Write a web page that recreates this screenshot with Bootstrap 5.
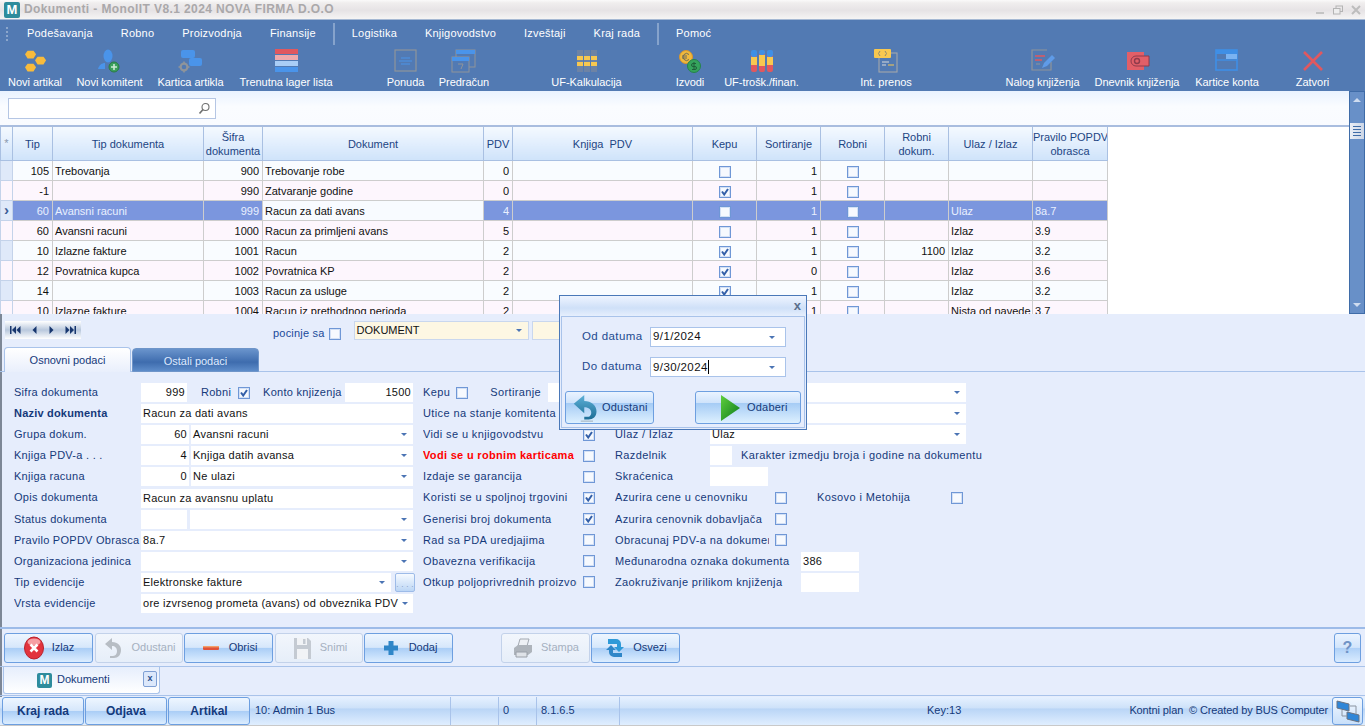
<!DOCTYPE html>
<html lang="sr">
<head>
<meta charset="UTF-8">
<title>Dokumenti - MonolIT</title>
<link href="https://cdn.jsdelivr.net/npm/bootstrap@5.3.0/dist/css/bootstrap.min.css" rel="stylesheet">
<style>
html, body { height: 726px; overflow: hidden; }
body { width: 1365px; background: #e6edfc; font-family: "Liberation Sans", Arial, sans-serif; font-size: 11px; color: #15397a; position: relative; line-height: 1.2; }
.app { height: 726px; border-left: 2px solid #7d8796; }
.app > * { margin-left: -2px; }

/* title + menu */
.titlebar { height: 19px; background: linear-gradient(#fafafa 0, #f0eeee 15%, #e6e3e5 55%, #f5f4f4 100%); color: #aaa8aa; font-weight: 700; font-size: 12px; letter-spacing: .4px; }
.mlogo { width: 16px; height: 16px; background: #2e8c9c; color: #fff; font-weight: 700; font-size: 13px; line-height: 16px; text-align: center; border-radius: 2px; flex: none; letter-spacing: 0; }
.win-btns { gap: 8px; }
.win-btns svg { display: block; }
.menuband { background: #527ab3; color: #fff; height: 72px; border-top: 1px solid #a5b8d3; }
.menurow { height: 26px; padding: 1px 0 0 27px; gap: 28px; letter-spacing: .2px; position: relative; }
.menu-grip { position: absolute; left: 6px; top: 7px; width: 2px; height: 14px; border-left: 2px dotted #8ba6cc; }
.menu-sep { width: 2px; height: 22px; background: #86a3cc; margin: 0 -11px; }
.toolrow { padding-left: 8px; gap: 15px; }
.tool { display: flex; flex-direction: column; align-items: center; white-space: nowrap; letter-spacing: -.04px; }
.tool svg { height: 24px; width: 26px; display: block; margin: 3px 0; }
.t30 { width: 30px; } .t35 { width: 35px; } .t37 { width: 37px; } .t50 { width: 50px; } .t54 { width: 54px; } .t64 { width: 64px; } .t65 { width: 65px; } .t67 { width: 67px; } .t73 { width: 73px; } .t77 { width: 77px; } .t86 { width: 86px; } .t92 { width: 92px; }
.sp1 { margin-left: 1px; } .sp2 { margin-left: 2px; } .sp3 { margin-left: 3px; } .sp40 { margin-left: 40px; } .sp49 { margin-left: 49px; } .sp44 { margin-left: 44px; } .sp78 { margin-left: 78px; } .sp21 { margin-left: 21px; }

/* search strip */
.searchbar { height: 34px; background: linear-gradient(#e9f2ff 0, #fafcff 45%, #f9fbff 100%); padding: 7px 8px 0; width: 1349px; }
.searchbox { width: 208px; height: 21px; background: #fff; border: 1px solid #b5c6e4; }

/* grid */
.gridwrap { width: 1349px; height: 189px; overflow: hidden; background: #fff; border-top: 2px solid #a9bddf; }
.dgrid { table-layout: fixed; width: 1107px; margin: 0; font-size: 11px; border-collapse: collapse; color: #111; }
.dgrid th, .dgrid td { padding: 1px 2px 0; border: 1px solid #cdcdcd; height: 20px; line-height: 18px; white-space: nowrap; overflow: hidden; vertical-align: middle; }
.dgrid thead th { height: 33px; line-height: 14px; font-weight: 400; text-align: center; color: #1d4583; background: linear-gradient(#f4f9ff, #cfe3fa); border: 1px solid #a9c0e2; border-top: 0; }
.dgrid tbody td { background: #f9fcff; }
.dgrid tbody tr.alt td { background: #fdf6fd; }
.dgrid tbody tr.cur td { background: #7b96de; color: #e9f0ff; }
.dgrid tbody tr.cur td.focus { background: #f8fbff; color: #111; }
.dgrid tbody td.ind, .dgrid tbody tr.cur td.ind { background: #dfe9f9; padding: 0; color: #3a5d96; font-size: 15px; font-weight: 700; line-height: 14px; text-align: center; border-color: #c4d3ea; }
.dgrid thead th.star { color: #8b98ad; padding: 0; }
.dgrid .rt { text-align: right; padding-right: 3px; }
.dgrid .cc { text-align: center; }
.vscroll { width: 16px; background: #6890c8; border: 1px solid #3f6ca8; position: relative; }
.vscroll .up, .vscroll .down { position: absolute; left: 3px; width: 0; height: 0; border-left: 4px solid transparent; border-right: 4px solid transparent; }
.vscroll .up { top: 6px; border-bottom: 4px solid #cfdcf0; }
.vscroll .down { bottom: 6px; border-top: 4px solid #cfdcf0; }
.vscroll .thumb { position: absolute; left: 0; right: 0; top: 31px; height: 16px; background: linear-gradient(90deg, #e9eef6, #ccd6e6); padding: 3px; display: flex; flex-direction: column; justify-content: space-between; }
.vscroll .thumb i { height: 1px; background: #3f6ca8; display: block; }

/* check boxes */
.form-check-input.ck { width: 12px; height: 12px; margin: 0; border: 1px solid #6f97d6; border-radius: 0; background-color: #f6f9fe; box-shadow: inset 0 0 0 1px #d3e0f5; flex: none; float: none; display: inline-block; opacity: 1; vertical-align: middle; }
.form-check-input.ck:checked { background-color: #f6f9fe; border-color: #6f97d6; background-size: 10px 10px; background-image: url("data:image/svg+xml,%3Csvg xmlns='http://www.w3.org/2000/svg' viewBox='0 0 10 10'%3E%3Cpath d='M2 4.5 4.2 7.5 8 2' fill='none' stroke='%23335fa8' stroke-width='2'/%3E%3C/svg%3E"); }

/* nav strip + tabs */
.navstrip { height: 33px; padding-top: 7px; padding-left: 5px; width: 1349px; }
.recnav { width: 76px; height: 18px; background: linear-gradient(#fff, #b9c8dd 50%, #fff); padding: 0 5px; flex: none; }
.pocinje { margin-left: 192px; gap: 4px; margin-top: -1px; color: #1a4a9a; letter-spacing: .2px; }
.yel { background: #fdf7e3; border: 1px solid #c9d7ee; height: 19px; color: #111; padding: 0 2px; line-height: 17px; flex: none; }
.yel-a { width: 175px; margin-left: 13px; }
.yel-b { width: 60px; margin-left: 3px; }
.drop { width: 0; height: 0; border-left: 3px solid transparent; border-right: 3px solid transparent; border-top: 3px solid #4b74b4; flex: none; }
.tabsrow { height: 25px; padding-left: 4px; gap: 1px; position: relative; z-index: 1; margin-bottom: -1px; }
.tab-on, .tab-off { width: 127px; text-align: center; line-height: 24px; border-radius: 4px 4px 0 0; }
.tab-on { background: linear-gradient(#fff, #e9effc); border: 1px solid #a9c3ea; border-bottom: 0; }
.tab-off { background: linear-gradient(#6a94cc, #3e6cae 60%, #5d8cc9); color: #dfeaff; border: 1px solid #6f95c9; margin-top: 1px; }

/* form */
.formpanel { height: 258px; border-top: 1px solid #a9c3ea; border-bottom: 2px solid #9dbbe8; padding: 10px 0 0 14px; gap: 10px; letter-spacing: .27px; }
.form-left { width: 399px; flex: none; }
.form-right { width: 543px; flex: none; letter-spacing: .38px; }
.frow { height: 21.1px; align-items: center; white-space: nowrap; }
.fl { width: 127px; flex: none; overflow: hidden; }
.fl b { font-weight: 700; font-size: 11px; letter-spacing: .2px; }
.fi { background: #fff; height: 19px; line-height: 19px; color: #111; padding: 0 2px; flex: none; overflow: hidden; white-space: nowrap; letter-spacing: .27px; }
.fi.num { text-align: right; }
.fs { background: #fff; height: 19px; line-height: 19px; color: #111; padding: 0 2px; display: flex; align-items: center; justify-content: space-between; overflow: hidden; white-space: nowrap; flex: none; letter-spacing: .27px; }
.fs .drop { margin: 0 4px; }
.w46 { width: 46px; } .w48 { width: 48px; margin-right: 2px; } .w223 { width: 223px; } .w272 { width: 272px; } .w250 { width: 250px; }
.w48b { width: 46px; margin-right: 3px; } .w222 { width: 222px; }
.gap-robni { margin: 0 7px 0 14px; } .gap-konto { margin: 0 2px 0 13px; } .w68 { width: 68px; }
.more { width: 20px; height: 19px; margin-left: 4px; border: 1px solid #9dbbe8; border-radius: 2px; background: linear-gradient(#f6faff, #bcd6f5); color: #7a93b6; font-size: 8px; line-height: 22px; text-align: center; flex: none; }
.lm { width: 154px; margin-right: 6px; flex: none; overflow: hidden; }
.red-lbl { color: #f00; font-weight: 700; letter-spacing: .32px; }
.lr { width: 95px; flex: none; margin-left: 20px; }
.lr2 { width: 154px; margin-right: 6px; flex: none; margin-left: 20px; overflow: hidden; }
.lr3 { width: 186px; flex: none; margin-left: 20px; }
.form-check-input.ck.kepu-ck { margin-left: 6px; } .sort-lb { margin-left: 22px; } .r1-in { margin-left: 7px; flex: 1 1 auto; }
.r2-in { width: 400px; margin-left: auto; } .r3-in { width: 256px; }
.in-a { width: 22px; } .in-b { width: 58px; } .in-c { width: 58px; }
.note { margin-left: 9px; }
.kosovo { margin-left: 30px; width: 134px; flex: none; }

/* buttons */
.actionbar { height: 37px; padding: 4px 4px 0; position: relative; }
.wbtn { width: 89px; height: 30px; display: flex; align-items: center; justify-content: center; gap: 7px; border: 1px solid #6d9fe0; border-radius: 3px; color: #15397a; background: linear-gradient(#eef6ff 0, #d6e7fb 48%, #a9cdf6 50%, #dcedff 100%); flex: none; }
.wbtn.off { color: #a5b0c0; border-color: #c3d2ea; background: linear-gradient(#f2f6fc, #e6eef9); }
.wbtn svg { width: 22px; height: 24px; }
.narrow { width: 88px; margin: 0 1px 0 2px; }
.gap48 { margin-left: 48px; } .gap1 { margin-left: 1px; }
.helpbtn { width: 27px; height: 30px; border: 1px solid #6d9fe0; border-radius: 3px; margin-left: auto; background: linear-gradient(#eaf3ff 0, #d2e5fb 48%, #aed0f7 50%, #d9ebff 100%); color: #6f93c6; font-size: 16px; font-weight: 700; text-align: center; line-height: 28px; }
.tabstrip { height: 30px; border-top: 1px solid #a9c3ea; border-bottom: 1px solid #a9c3ea; padding-left: 3px; }
.doctab { width: 157px; height: 27px; background: linear-gradient(#e6eefc, #fff); border: 1px solid #a9c3ea; border-top: 0; border-radius: 0 0 3px 3px; gap: 5px; padding-left: 33px; color: #15397a; position: relative; }
.doctab .mlogo { width: 15px; height: 15px; font-size: 12px; line-height: 15px; }
.tabx { position: absolute; right: 2px; top: 4px; width: 14px; height: 16px; border: 1px solid #7fa0d4; border-radius: 2px; background: #dce8fb; font-size: 9px; font-weight: 700; line-height: 13px; text-align: center; color: #2b4e8b; }

/* status bar */
.statusbar { height: 29px; padding: 0 2px; background: linear-gradient(#e6f1ff 0, #cde1f9 40%, #b9d5f6 42%, #e0eeff 100%); margin-top: 1px; color: #15397a; border-bottom: 1px solid #c9c9c9; position: relative; }
.sbtn { width: 82px; height: 28px; border: 1px solid #6d9fe0; border-radius: 3px; background: linear-gradient(#eef6ff 0, #d6e7fb 48%, #a9cdf6 50%, #dcedff 100%); font-weight: 700; font-size: 12px; text-align: center; line-height: 26px; margin-right: 1px; flex: none; color: #143a7c; }
.scell { height: 100%; display: flex; align-items: center; border-right: 1px solid #a9c3ea; padding-left: 4px; flex: none; }
.c-user { width: 200px; } .c-empty { width: 48px; } .c-zero { width: 38px; } .c-ver { width: 83px; }
.skey { margin-left: 307px; }
.sinfo { margin-left: auto; margin-right: 4px; letter-spacing: -.12px; }
.netbtn { width: 31px; height: 28px; border: 1px solid #6d9fe0; border-radius: 3px; background: linear-gradient(#f2f8ff, #c9e0fa); flex: none; }

/* date dialog */
.dlg { position: absolute; left: 559px; top: 295px; width: 248px; height: 135px; background: #e6edfc; border: 1px solid #4a78b8; z-index: 10; }
.dlg-head { height: 20px; background: linear-gradient(#eef4ff, #cfe0f8 60%, #e6effd); color: #5b6f8c; font-weight: 700; font-size: 13px; text-align: right; padding-right: 5px; line-height: 20px; }
.dlg-body { margin: 0 1px 1px; height: 112px; border: 1px solid #a9c3ea; padding: 10px 3px 0; position: relative; letter-spacing: .4px; color: #1d4a8f; font-size: 11.5px; }
.dlg-row { height: 20px; margin-bottom: 10px; margin-left: 17px; }
.dlg-row .lb { width: 68px; flex: none; }
.dlg-in { width: 136px; height: 20px; background: #fff; border: 1px solid #a9c3ea; color: #111; padding: 0 2px; font-size: 11.5px; }
.caret-bar { display: inline-block; width: 1px; height: 14px; background: #000; vertical-align: -3px; }
.dlg-btns { margin-top: 14px; }
.dlg-btn { height: 33px; border: 1px solid #6d9fe0; border-radius: 3px; background: linear-gradient(#eaf3ff 0, #cfe3fb 35%, #a6ccf5 37%, #ddf0ff 100%); color: #15397a; font-size: 11px; letter-spacing: .2px; }
.dlg-cancel { width: 89px; padding-left: 6px; gap: 2px; }
.dlg-cancel svg { width: 28px; height: 30px; flex: none; }
.dlg-ok { width: 106px; padding-left: 23px; gap: 4px; }
.dlg-ok svg { width: 24px; height: 28px; flex: none; }
</style>
</head>
<body>
<div class="app d-flex flex-column">

  <div class="titlebar d-flex align-items-center">
    <span class="mlogo ms-1 me-1">M</span>
    <span>Dokumenti - MonolIT V8.1 2024 NOVA FIRMA D.O.O</span>
    <span class="win-btns d-flex align-items-center ms-auto me-1">
      <svg width="10" height="10" viewBox="0 0 10 10"><rect x="1" y="7" width="8" height="2" fill="#c4c4c4"/></svg>
      <svg width="10" height="10" viewBox="0 0 10 10"><rect x="3" y="1" width="6.5" height="5.5" fill="none" stroke="#b4b4b4"/><rect x=".5" y="3.5" width="6.5" height="5.5" fill="#eee" stroke="#b4b4b4"/></svg>
      <svg width="10" height="10" viewBox="0 0 10 10"><path d="M1 1 9 9M9 1 1 9" stroke="#bdbdbd" stroke-width="2"/></svg>
    </span>
  </div>

  <div class="menuband">
    <div class="menurow d-flex align-items-center">
      <span class="menu-grip"></span>
      <span>Podešavanja</span><span>Robno</span><span>Proizvodnja</span><span>Finansije</span>
      <span class="menu-sep"></span>
      <span>Logistika</span><span>Knjigovodstvo</span><span>Izveštaji</span><span>Kraj rada</span>
      <span class="menu-sep"></span>
      <span>Pomoć</span>
    </div>
    <div class="toolrow d-flex">
      <div class="tool t54"><svg viewBox="0 0 26 24"><g fill="#f8bb3c"><path d="M3 1h7l3 4-3 5H3L0 5z" transform="translate(3 1) scale(.85)"/><path d="M3 1h7l3 4-3 5H3L0 5z" transform="translate(13 7) scale(.85)"/><path d="M3 1h7l3 4-3 5H3L0 5z" transform="translate(3 14) scale(.85)"/></g></svg>Novi artikal</div>
      <div class="tool t65"><svg viewBox="0 0 26 24"><ellipse cx="11" cy="7" rx="4.5" ry="6.5" fill="#4a94ea"/><path d="M1 20c1-4 4-6 7-6v6z" fill="#4a94ea"/><circle cx="17" cy="18" r="5" fill="#3ba05c" stroke="#2a7a44"/><path d="M17 15v6M14 18h6" stroke="#cde8d4" stroke-width="1.6"/></svg>Novi komitent</div>
      <div class="tool t65 sp1"><svg viewBox="0 0 26 24"><rect x="3" y="1" width="14" height="8" rx="2" fill="#4a94ea"/><rect x="11" y="9" width="13" height="8" rx="2" fill="#4a94ea"/><circle cx="6" cy="18" r="3.4" fill="none" stroke="#8f949a" stroke-width="2.2"/><path d="M6 12.5v2M6 21.5v2M.5 18h2M9.5 18h2" stroke="#8f949a" stroke-width="1.6"/></svg>Kartica artikla</div>
      <div class="tool t92 sp2"><svg viewBox="0 0 26 24"><rect x="2" y="0" width="23" height="5" fill="#e0585f"/><rect x="2" y="6" width="23" height="5" fill="#f0a9ab"/><rect x="2" y="12" width="23" height="5" fill="#a9cdf6"/><rect x="2" y="18" width="23" height="5" fill="#4a94ea"/></svg>Trenutna lager lista</div>
      <div class="tool t37 sp40"><svg viewBox="0 0 26 24"><rect x="2" y="1" width="21" height="21" fill="none" stroke="#8f949a" stroke-width="1.2"/><path d="M8 9h9M6 12h13M8 15h9" stroke="#4a94ea" stroke-width="1.2"/></svg>Ponuda</div>
      <div class="tool t50"><svg viewBox="0 0 26 24"><rect x="5" y="1" width="19" height="17" fill="#527ab3" stroke="#8f949a"/><rect x="5" y="1" width="19" height="4" fill="#4a94ea"/><rect x="1" y="8" width="17" height="15" fill="#527ab3" stroke="#8f949a"/><rect x="1" y="8" width="17" height="4" fill="#4a94ea"/><path d="M7 15h5l-2 5" fill="none" stroke="#8f949a"/></svg>Predračun</div>
      <div class="tool t67 sp49"><svg viewBox="0 0 26 24"><g fill="#6d83a5"><rect x="3" y="1" width="6" height="22"/><rect x="10" y="1" width="6" height="22"/><rect x="17" y="1" width="6" height="22"/></g><g fill="#f8c850"><rect x="3" y="7" width="6" height="4"/><rect x="10" y="7" width="6" height="4"/><rect x="17" y="7" width="6" height="4"/><rect x="3" y="13" width="6" height="4"/><rect x="10" y="13" width="6" height="4"/><rect x="17" y="13" width="6" height="4"/></g></svg>UF-Kalkulacija</div>
      <div class="tool t30 sp40"><svg viewBox="0 0 26 24"><circle cx="9" cy="8" r="6.5" fill="#f0b93c" stroke="#d9952a"/><path d="M12 5.500a3.500 3.500 0 1 0 0 5M5 7h5M5 9h5" fill="none" stroke="#6c6a5a" stroke-width="1"/><circle cx="17" cy="17" r="6.5" fill="#35a35c" stroke="#25834a"/><path d="M17 13v8M19 14.500h-3a1.500 1.500 0 0 0 0 3h2a1.500 1.500 0 0 1 0 3h-3" fill="none" stroke="#1f5f3a" stroke-width="1"/></svg>Izvodi</div>
      <div class="tool t77 sp3"><svg viewBox="0 0 26 24"><g fill="#e0585f"><rect x="2" y="2" width="6" height="21" rx="2"/><rect x="10" y="2" width="6" height="21" rx="2"/><rect x="18" y="2" width="6" height="21" rx="2"/></g><g fill="#f8c850"><rect x="2" y="8" width="6" height="8"/><rect x="10" y="6" width="6" height="11"/><rect x="18" y="8" width="6" height="8"/></g><g fill="#3f8fe6"><rect x="2" y="1" width="6" height="7" rx="2"/><rect x="10" y="1" width="6" height="5" rx="2"/><rect x="18" y="1" width="6" height="7" rx="2"/></g></svg>UF-trošk./finan.</div>
      <div class="tool t54 sp44"><svg viewBox="0 0 26 24"><rect x="6" y="4" width="18" height="19" fill="none" stroke="#a3a6aa" stroke-width="1.1"/><rect x="1" y="0" width="17" height="9" rx="1" fill="#f8c850"/><path d="M7 2 5.500 4.500 7 7M12 2l1.500 2.500L12 7" fill="none" stroke="#8f8a70"/><path d="M9 13h7M9 16h4" stroke="#d8d8d8"/><path d="M15 16h6" stroke="#f8c850"/></svg>Int. prenos</div>
      <div class="tool t73 sp78"><svg viewBox="0 0 26 24"><path d="M17 1H2v20h19V13" fill="none" stroke="#8f949a" stroke-width="1.2"/><path d="M5 7h10M5 11h7" stroke="#e0585f" stroke-width="1.4"/><path d="M12 19l2-5 8-8 3 3-8 8z" fill="#5f9be8"/><path d="M6 15h4" stroke="#8f949a"/></svg>Nalog knjiženja</div>
      <div class="tool t86"><svg viewBox="0 0 26 24"><path d="M3 3h17v18H3z" fill="#e25f68"/><path d="M12 7h13v10H12a5 5 0 0 1 0-10z" fill="#e25f68" stroke="#8e3b4b"/><circle cx="13" cy="12" r="2.500" fill="none" stroke="#8e3b4b" stroke-width="1.4"/></svg>Dnevnik knjiženja</div>
      <div class="tool t64"><svg viewBox="0 0 26 24"><rect x="2" y="1" width="21" height="20" fill="#527ab3" stroke="#3f8fe6" stroke-width="1.6"/><rect x="2" y="1" width="21" height="4" fill="#3f8fe6"/><rect x="12" y="5" width="11" height="5" fill="#7bb3f1"/><path d="M2 11h21" stroke="#3f8fe6" stroke-width="1.4"/></svg>Kartice konta</div>
      <div class="tool t35 sp21"><svg viewBox="0 0 26 24"><path d="M4 3 22 21M22 3 4 21" stroke="#e0585f" stroke-width="2.600"/></svg>Zatvori</div>
    </div>
  </div>

  <div class="d-flex">
    <div>
      <div class="searchbar">
        <div class="searchbox d-flex align-items-center justify-content-end pe-1">
          <svg width="13" height="13" viewBox="0 0 13 13"><circle cx="7.500" cy="5" r="3.500" fill="none" stroke="#6f7070" stroke-width="1.100"/><path d="M5 7.500 1.500 11.500" stroke="#6f7070" stroke-width="1.600"/></svg>
        </div>
      </div>
      <div class="gridwrap">
        <table class="dgrid">
          <colgroup>
            <col style="width:12px"><col style="width:40px"><col style="width:151px"><col style="width:59px"><col style="width:221px"><col style="width:29px"><col style="width:180px"><col style="width:64px"><col style="width:64px"><col style="width:64px"><col style="width:64px"><col style="width:84px"><col style="width:75px">
          </colgroup>
          <thead>
            <tr><th class="star">*</th><th>Tip</th><th>Tip dokumenta</th><th class="px-0">Šifra<br>dokumenta</th><th>Dokument</th><th class="px-0">PDV</th><th>Knjiga&nbsp; PDV</th><th>Kepu</th><th class="px-0">Sortiranje</th><th>Robni</th><th class="px-0">Robni<br>dokum.</th><th class="px-0">Ulaz / Izlaz</th><th class="px-0">Pravilo POPDV<br>obrasca</th></tr>
          </thead>
          <tbody id="rows"></tbody>
        </table>
      </div>
    </div>
    <div class="vscroll"><span class="up"></span><span class="thumb"><i></i><i></i><i></i><i></i></span><span class="down"></span></div>
  </div>

  <div class="navstrip d-flex">
    <div class="recnav d-flex align-items-center justify-content-between">
      <svg width="11" height="8" viewBox="0 0 11 8"><path d="M0 0h1.500v8H0zM6 0v8L2 4zM10.500 0v8l-4-4z" fill="#17366e"/></svg>
      <svg width="5" height="8" viewBox="0 0 5 8"><path d="M4.500 0v8L.5 4z" fill="#17366e"/></svg>
      <svg width="5" height="8" viewBox="0 0 5 8"><path d="M.5 0v8l4-4z" fill="#17366e"/></svg>
      <svg width="11" height="8" viewBox="0 0 11 8"><path d="M11 0H9.500v8H11zM5 0v8l4-4zM.5 0v8l4-4z" fill="#17366e"/></svg>
    </div>
    <div class="pocinje d-flex align-items-center"><span>pocinje sa</span><input class="form-check-input ck" type="checkbox"></div>
    <div class="yel yel-a d-flex align-items-center justify-content-between"><span>DOKUMENT</span><span class="drop me-1"></span></div>
    <div class="yel yel-b"></div>
  </div>

  <div class="tabsrow d-flex">
    <div class="tab-on">Osnovni podaci</div>
    <div class="tab-off">Ostali podaci</div>
  </div>

  <div class="formpanel d-flex">
    <div class="form-left">
      <div class="frow d-flex"><span class="fl">Sifra dokumenta</span><span class="fi num w46">999</span><span class="gap-robni">Robni</span><input class="form-check-input ck" type="checkbox" checked><span class="gap-konto">Konto knjizenja</span><span class="fi num w68 ms-auto">1500</span></div>
      <div class="frow d-flex"><span class="fl"><b>Naziv dokumenta</b></span><span class="fi w272">Racun za dati avans</span></div>
      <div class="frow d-flex"><span class="fl">Grupa dokum.</span><span class="fi num w48">60</span><span class="fs w222"><span>Avansni racuni</span><span class="drop"></span></span></div>
      <div class="frow d-flex"><span class="fl">Knjiga PDV-a . . .</span><span class="fi num w48">4</span><span class="fs w222"><span>Knjiga datih avansa</span><span class="drop"></span></span></div>
      <div class="frow d-flex"><span class="fl">Knjiga racuna</span><span class="fi num w48">0</span><span class="fs w222"><span>Ne ulazi</span><span class="drop"></span></span></div>
      <div class="frow d-flex"><span class="fl">Opis dokumenta</span><span class="fi w272">Racun za avansnu uplatu</span></div>
      <div class="frow d-flex"><span class="fl">Status dokumenta</span><span class="fi w48b"></span><span class="fs w223"><span></span><span class="drop"></span></span></div>
      <div class="frow d-flex"><span class="fl">Pravilo POPDV Obrasca</span><span class="fs w272"><span>8a.7</span><span class="drop"></span></span></div>
      <div class="frow d-flex"><span class="fl">Organizaciona jedinica</span><span class="fs w272"><span></span><span class="drop"></span></span></div>
      <div class="frow d-flex"><span class="fl">Tip evidencije</span><span class="fs w250"><span>Elektronske fakture</span><span class="drop"></span></span><span class="more">. . . .</span></div>
      <div class="frow d-flex"><span class="fl">Vrsta evidencije</span><span class="fs w272"><span>ore izvrsenog prometa (avans) od obveznika PDV</span><span class="drop"></span></span></div>
    </div>
    <div class="form-right">
      <div class="frow d-flex"><span>Kepu</span><input class="form-check-input ck kepu-ck" type="checkbox"><span class="sort-lb">Sortiranje</span><span class="fs r1-in"><span></span><span class="drop"></span></span></div>
      <div class="frow d-flex"><span>Utice na stanje komitenta</span><span class="fs r2-in"><span></span><span class="drop"></span></span></div>
      <div class="frow d-flex"><span class="lm">Vidi se u knjigovodstvu</span><input class="form-check-input ck" type="checkbox" checked><span class="lr">Ulaz / Izlaz</span><span class="fs r3-in"><span>Ulaz</span><span class="drop"></span></span></div>
      <div class="frow d-flex"><span class="lm red-lbl">Vodi se u robnim karticama</span><input class="form-check-input ck" type="checkbox"><span class="lr">Razdelnik</span><span class="fi in-a"></span><span class="note">Karakter izmedju broja i godine na dokumentu</span></div>
      <div class="frow d-flex"><span class="lm">Izdaje se garancija</span><input class="form-check-input ck" type="checkbox"><span class="lr">Skraćenica</span><span class="fi in-b"></span></div>
      <div class="frow d-flex"><span class="lm">Koristi se u spoljnoj trgovini</span><input class="form-check-input ck" type="checkbox" checked><span class="lr2">Azurira cene u cenovniku</span><input class="form-check-input ck" type="checkbox"><span class="kosovo">Kosovo i Metohija</span><input class="form-check-input ck" type="checkbox"></div>
      <div class="frow d-flex"><span class="lm">Generisi broj dokumenta</span><input class="form-check-input ck" type="checkbox" checked><span class="lr2">Azurira cenovnik dobavljača</span><input class="form-check-input ck" type="checkbox"></div>
      <div class="frow d-flex"><span class="lm">Rad sa PDA uredjajima</span><input class="form-check-input ck" type="checkbox"><span class="lr2">Obracunaj PDV-a na dokumentu</span><input class="form-check-input ck" type="checkbox"></div>
      <div class="frow d-flex"><span class="lm">Obavezna verifikacija</span><input class="form-check-input ck" type="checkbox"><span class="lr3">Međunarodna oznaka dokumenta</span><span class="fi in-c">386</span></div>
      <div class="frow d-flex"><span class="lm">Otkup poljoprivrednih proizvoda</span><input class="form-check-input ck" type="checkbox"><span class="lr3">Zaokruživanje prilikom knjiženja</span><span class="fi in-c"></span></div>
    </div>
  </div>

  <div class="actionbar d-flex">
    <div class="wbtn"><svg viewBox="0 0 22 24"><ellipse cx="11" cy="12" rx="9.500" ry="11" fill="#e2333d" stroke="#b9222c"/><ellipse cx="11" cy="6" rx="6.500" ry="3.500" fill="#f6a0a4"/><path d="M7.500 8.500l7 7M14.500 8.500l-7 7" stroke="#fff" stroke-width="2.600"/></svg>Izlaz</div>
    <div class="wbtn off narrow"><svg viewBox="0 0 22 24"><path d="M3 8 10 2v4c6 0 9 4 9 8 0 5-3 8-7 8H8v-2h3c3 0 4-3 4-5 0-3-2-5-5-5v4z" fill="#b7bdc4"/></svg>Odustani</div>
    <div class="wbtn"><svg viewBox="0 0 22 24"><rect x="3" y="10" width="16" height="4" rx="1" fill="#e0523a"/><rect x="3" y="10" width="16" height="1.400" fill="#f2a06a"/></svg>Obrisi</div>
    <div class="wbtn off narrow"><svg viewBox="0 0 22 24"><path d="M3 2h14l3 3v18H3z" fill="#c4cad2"/><rect x="6" y="2" width="10" height="7" fill="#f1f3f6"/><rect x="12" y="3" width="2.500" height="5" fill="#c4cad2"/><rect x="6" y="13" width="11" height="10" fill="#f1f3f6"/></svg>Snimi</div>
    <div class="wbtn"><svg viewBox="0 0 22 24"><path d="M8.500 5h5v4.500h4.500v5h-4.500v4.500h-5v-4.500h-4.500v-5h4.500z" fill="#2f86c8"/></svg>Dodaj</div>
    <div class="wbtn off gap48"><svg viewBox="0 0 22 24"><path d="M8 3h9l-2 7H6z" fill="#eef1f5" stroke="#a3a9b1"/><path d="M2 12l4-3h14v7l-4 3H2z" fill="#aeb4bb"/><path d="M4 16h11v5H4z" fill="#dfe3e8" stroke="#9aa0a8"/></svg>Stampa</div>
    <div class="wbtn gap1"><svg viewBox="0 0 22 24"><path d="M4 3h8a5 5 0 0 1 5 5v3h3l-5 5-5-5h3V8H4z" fill="#2f9ad8"/><path d="M18 21h-8a5 5 0 0 1-5-5v-2H2l5-5 5 5H9v3h9z" fill="#2f86c8"/></svg>Osvezi</div>
    <div class="helpbtn">?</div>
  </div>

  <div class="tabstrip">
    <div class="doctab d-flex align-items-center"><span class="mlogo">M</span><span>Dokumenti</span><span class="tabx">x</span></div>
  </div>

  <div class="statusbar d-flex align-items-center">
    <div class="sbtn">Kraj rada</div><div class="sbtn">Odjava</div><div class="sbtn">Artikal</div>
    <div class="scell c-user">10: Admin 1 Bus</div><div class="scell c-empty"></div><div class="scell c-zero">0</div><div class="scell c-ver">8.1.6.5</div>
    <span class="skey">Key:13</span>
    <span class="sinfo">Kontni plan&nbsp; © Created by BUS Computer</span>
    <div class="netbtn d-flex align-items-center justify-content-center"><svg width="28" height="26" viewBox="0 0 28 26"><path d="M3 3 15 6v7L3 10z" fill="#2f86d8" stroke="#6b7280"/><path d="M13 14l12 3v7l-12-3z" fill="#2f86d8" stroke="#6b7280"/><path d="M8 12v6h5M16 8h6v8" fill="none" stroke="#8a93a0"/></svg></div>
  </div>
</div>

<div class="dlg">
  <div class="dlg-head">x</div>
  <div class="dlg-body">
    <div class="dlg-row d-flex align-items-center"><span class="lb">Od datuma</span><div class="dlg-in d-flex align-items-center justify-content-between"><span>9/1/2024</span><span class="drop me-2"></span></div></div>
    <div class="dlg-row d-flex align-items-center"><span class="lb">Do datuma</span><div class="dlg-in d-flex align-items-center justify-content-between"><span>9/30/2024<span class="caret-bar"></span></span><span class="drop me-2"></span></div></div>
    <div class="d-flex justify-content-between dlg-btns">
      <div class="dlg-btn dlg-cancel d-flex align-items-center"><svg viewBox="0 0 32 34"><defs><linearGradient id="ar" x1="0" y1="0" x2="0" y2="1"><stop offset="0" stop-color="#5eb1d8"/><stop offset="1" stop-color="#1d6e96"/></linearGradient></defs><path d="M2 12 14 2v7c8 0 14 5 14 12 0 6-4 9-9 9h-5v-3h4c3 0 4-3 4-5 0-4-4-6-8-6v7z" fill="url(#ar)"/><path d="M10 32h14" stroke="#9aa6b0"/></svg><span>Odustani</span></div>
      <div class="dlg-btn dlg-ok d-flex align-items-center"><svg viewBox="0 0 24 28"><defs><linearGradient id="pl" x1="0" y1="0" x2="1" y2="1"><stop offset="0" stop-color="#5fcf3d"/><stop offset="1" stop-color="#0c7a1b"/></linearGradient></defs><path d="M2 1 21 14 2 27z" fill="url(#pl)"/></svg><span>Odaberi</span></div>
    </div>
  </div>
</div>

<script>
  // grid data: tip, naziv, sifra, dokument, pdv, kepu, sort, robni, robni dok, ulaz/izlaz, popdv
  var data = [
    ['105','Trebovanja','900','Trebovanje robe','0',0,'1',0,'','',''],
    ['-1','','990','Zatvaranje godine','0',1,'1',0,'','',''],
    ['60','Avansni racuni','999','Racun za dati avans','4',0,'1',0,'','Ulaz','8a.7'],
    ['60','Avansni racuni','1000','Racun za primljeni avans','5',0,'1',0,'','Izlaz','3.9'],
    ['10','Izlazne fakture','1001','Racun','2',1,'1',0,'1100','Izlaz','3.2'],
    ['12','Povratnica kupca','1002','Povratnica KP','2',1,'0',0,'','Izlaz','3.6'],
    ['14','','1003','Racun za usluge','2',1,'1',0,'','Izlaz','3.2'],
    ['10','Izlazne fakture','1004','Racun iz prethodnog perioda','2',1,'1',0,'','Nista od navede','3.7']
  ];
  function ck(on) { return '<input class="form-check-input ck" type="checkbox"' + (on ? ' checked' : '') + '>'; }
  document.getElementById('rows').innerHTML = data.map(function (r, i) {
    var cls = i === 2 ? 'cur' : (i % 2 ? 'alt' : '');
    return '<tr class="' + cls + '"><td class="ind">' + (i === 2 ? '&#8250;' : '') + '</td>' +
      '<td class="rt">' + r[0] + '</td><td>' + r[1] + '</td><td class="rt">' + r[2] + '</td>' +
      '<td class="focus">' + r[3] + '</td><td class="rt">' + r[4] + '</td><td></td>' +
      '<td class="cc">' + ck(r[5]) + '</td><td class="rt">' + r[6] + '</td><td class="cc">' + ck(r[7]) + '</td>' +
      '<td class="rt">' + r[8] + '</td><td>' + r[9] + '</td><td>' + r[10] + '</td></tr>';
  }).join('');
</script>
</body>
</html>
